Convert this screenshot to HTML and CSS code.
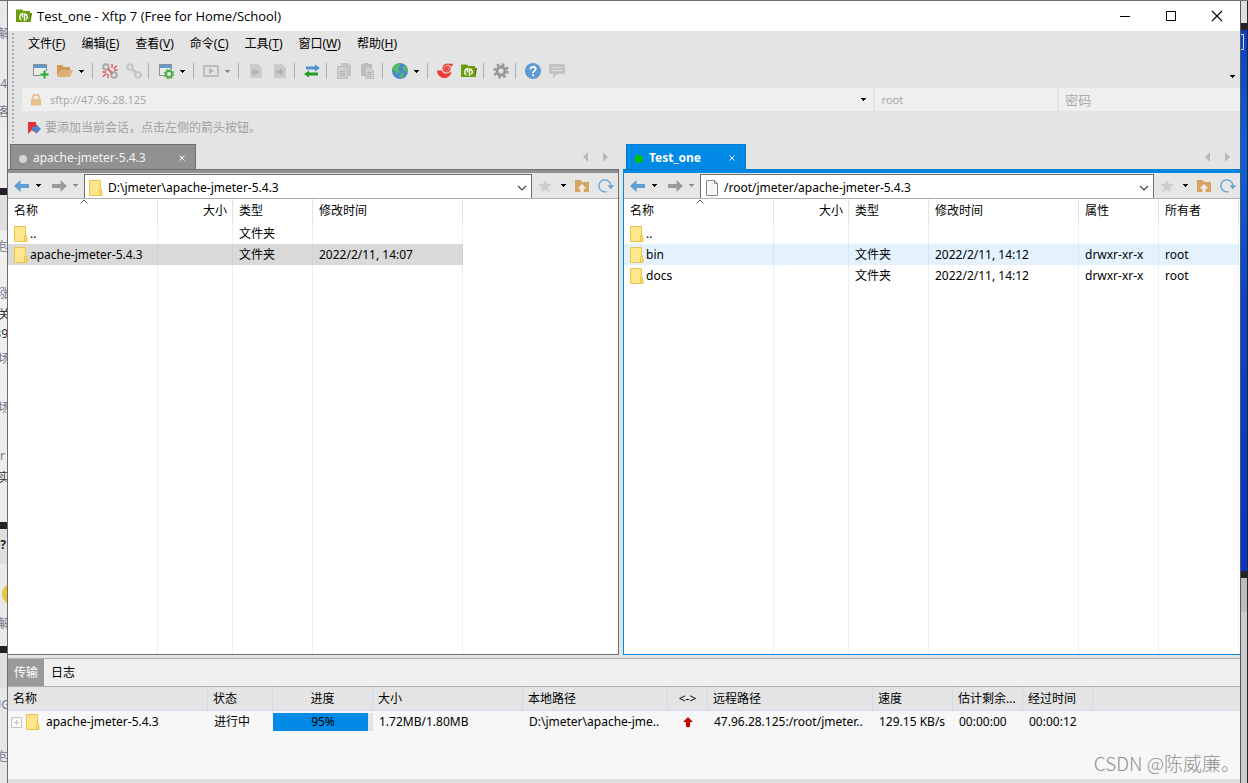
FILE: index.html
```html
<!DOCTYPE html>
<html lang="zh-CN">
<head>
<meta charset="utf-8">
<title>Test_one - Xftp 7</title>
<link rel="stylesheet" href="styles.css">
</head>
<body>
<svg class="defs" aria-hidden="true">
  <symbol id="xftp" viewBox="0 0 16 16"><path d="M0 1.500h6l1.500 1.500H14v11H0z" fill="#6c9c0c"/><path d="M14 5h2l-1.500 9H14z" fill="#557d05"/><path d="M5.300 12A3.600 3.600 0 0 1 6.500 5.500V9.500M8.500 13V6a3 3 0 0 1 1.500 5.500" fill="none" stroke="#fff" stroke-width="1.400"/></symbol>
  <symbol id="folder" viewBox="0 0 14 16"><path d="M.5.500h11v10.500l1.500.500v4H.5z" fill="#ffe58c" stroke="#e9c44a"/><path d="M10.500 15.500V10a1 1 0 0 1 2 0v5.500z" fill="#ffe07a" stroke="#e9c44a"/></symbol>
  <symbol id="page" viewBox="0 0 14 16"><path d="M1.500.500h8l3 3v12h-11z" fill="#f8f8f8" stroke="#888"/><path d="M9.500.500v3h3" fill="none" stroke="#888"/></symbol>
  <symbol id="caret" viewBox="0 0 5 3"><path d="M0 0h5v1H4v1H3v1H2V2H1V1H0z" fill="currentColor"/></symbol>
  <symbol id="back" viewBox="0 0 16 12"><path d="M0 6l6.500-6v4H15v4H6.500v4z" fill="currentColor"/></symbol>
  <symbol id="fwd" viewBox="0 0 16 12"><path d="M16 6L9.500 0v4H1v4h8.500v4z" fill="currentColor"/></symbol>
  <symbol id="star" viewBox="0 0 14 14"><path d="M7 .5l1.900 4.200 4.600.5-3.400 3.100.9 4.700L7 10.700 3 13l.9-4.700L.5 5.200l4.600-.5z" fill="#cdcdcd"/></symbol>
  <symbol id="up" viewBox="0 0 14 12"><path d="M0 0h5.500l1.500 2h7v10H0z" fill="#d5a464"/><path d="M7 4l4.500 4.500H8.700V12H5.300V8.500H2.500z" fill="#f2ece4"/></symbol>
  <symbol id="refresh" viewBox="0 0 16 14"><path d="M8.500 12.600A6 6 0 1 1 12.800 6" fill="none" stroke="#62a0d8" stroke-width="1.300"/><path d="M9.500 6.200h6.500l-3.200 4z" fill="#62a0d8"/></symbol>
  <symbol id="chev" viewBox="0 0 10 6"><path d="M1 1l4 4 4-4" fill="none" stroke="#444" stroke-width="1.200"/></symbol>
  <symbol id="cross" viewBox="0 0 8 8"><path d="M1.500 1.500l5 5M6.500 1.500l-5 5" fill="none" stroke="#fff"/></symbol>
  <symbol id="left" viewBox="0 0 5 10"><path d="M5 0v10L0 5z" fill="#b9b9b9"/></symbol>
  <symbol id="right" viewBox="0 0 5 10"><path d="M0 0v10l5-5z" fill="#b9b9b9"/></symbol>
  <symbol id="sort" viewBox="0 0 8 5"><path d="M.5 4.500L4 1l3.500 3.500" fill="none" stroke="#555"/></symbol>
</svg>

<div class="desk">
  <div class="behind behind-left" aria-hidden="true">
    <i class="bar b1"></i><i class="bar b2"></i><i class="bar b3"></i><i class="ball"></i>
    <span class="t1">解</span><span class="t2">24</span><span class="t3">客</span><span class="t4">包</span><span class="t5">涨</span><span class="t6">关</span><span class="t7">39</span><span class="t8">场</span><span class="t9">场</span><span class="t10">r</span><span class="t11">实</span><span class="t12">?</span><span class="t13">解</span><span class="t14">UG</span><span class="t15">包</span>
  </div>

  <main class="window">
    <header class="titlebar">
      <svg width="16" height="16"><use href="#xftp"/></svg>
      <h1>Test_one - Xftp 7 (Free for Home/School)</h1>
      <button aria-label="最小化"><svg width="12" height="12"><path d="M1 6.500h10" stroke="#000"/></svg></button>
      <button aria-label="最大化"><svg width="12" height="12"><path d="M1.500 1.500h9v9h-9z" stroke="#000" fill="none"/></svg></button>
      <button aria-label="关闭"><svg width="12" height="12"><path d="M1 1l10 10M11 1L1 11" stroke="#000" stroke-width="1.100"/></svg></button>
    </header>

    <section class="chrome">
      <i class="grip"></i>
      <div class="bars">
        <nav class="menu">
          <button>文件(<u>F</u>)</button><button>编辑(<u>E</u>)</button><button>查看(<u>V</u>)</button><button>命令(<u>C</u>)</button><button>工具(<u>T</u>)</button><button>窗口(<u>W</u>)</button><button>帮助(<u>H</u>)</button>
        </nav>
        <div class="toolbar">
          <button class="tool" aria-label="新建"><svg width="16" height="16"><path d="M8 12.500H.5v-11h13V8" fill="#ebebeb" stroke="#8c8c8c"/><path d="M1 2h12v3H1z" fill="#5f9bd3"/><path d="M11.500 7.500v8M7.500 11.500h8" stroke="#1fae24" stroke-width="2"/></svg></button>
          <button class="tool" aria-label="打开"><svg width="16" height="16"><path d="M0 2h5l1.500 2H13v3H4.500L0 13z" fill="#cf9a55"/><path d="M4 7h12l-3 7H0z" fill="#dcb077"/></svg></button>
          <button class="drop" aria-label="打开菜单"><svg width="5" height="3"><use href="#caret"/></svg></button>
          <i class="sep"></i>
          <button class="tool" aria-label="断开"><svg width="16" height="16" fill="none"><g stroke="#a9a9a9" stroke-width="2"><circle cx="4" cy="4" r="2.800"/><circle cx="12" cy="12" r="2.800"/></g><path d="M5.500 5.500L10.500 10.500" stroke="#cf6a6a" stroke-width="2"/><path d="M10 5V1M11.500 5.500l3.500-3M12 7h3.500M6 11v4M4.500 10.500L1 13.500M4 9H.5" stroke="#ea4a50" stroke-width="1.300"/></svg></button>
          <button class="tool" aria-label="重新连接"><svg width="16" height="16" fill="none" stroke="#c5c5c5" stroke-width="2"><circle cx="4" cy="4" r="2.800"/><circle cx="12" cy="12" r="2.800"/><path d="M5.500 5.500l5 5" stroke-width="3"/></svg></button>
          <i class="sep"></i>
          <button class="tool" aria-label="属性"><svg width="16" height="16"><path d="M7 12.500H1.500v-11h12V6" fill="#ebebeb" stroke="#8c8c8c"/><path d="M2 2h11v3H2z" fill="#5f9bd3"/><circle cx="11" cy="11" r="3" fill="#eee" stroke="#4caf45" stroke-width="2"/><circle cx="11" cy="11" r="4.500" fill="none" stroke="#4caf45" stroke-width="1.500" stroke-dasharray="1.770 1.770"/></svg></button>
          <button class="drop" aria-label="属性菜单"><svg width="5" height="3"><use href="#caret"/></svg></button>
          <i class="sep"></i>
          <button class="tool" aria-label="运行"><svg width="16" height="16"><rect x="1" y="3" width="14" height="10" rx="1" fill="none" stroke="#bdbdbd" stroke-width="2"/><path d="M6 5l5 3-5 3z" fill="#b5b5b5"/></svg></button>
          <button class="drop dim" aria-label="运行菜单"><svg width="5" height="3"><use href="#caret"/></svg></button>
          <i class="sep"></i>
          <button class="tool" aria-label="向左传输"><svg width="16" height="16"><path d="M2 1h8l4 4v10H2z" fill="#cbcbcb"/><path d="M3 9l4-4v2.500h4v3H7V13z" fill="#b3b3b3"/></svg></button>
          <button class="tool" aria-label="向右传输"><svg width="16" height="16"><path d="M2 1h8l4 4v10H2z" fill="#cbcbcb"/><path d="M12 9L8 5v2.500H4v3h4V13z" fill="#b3b3b3"/></svg></button>
          <i class="sep"></i>
          <button class="tool" aria-label="同步"><svg width="16" height="16"><path d="M2 3.500h9V1.500L16 5l-5 3.500v-2H2z" fill="#4f90cf"/><path d="M14 9.500H5v-2L0 11l5 3.500v-2h9z" fill="#1f9f24"/></svg></button>
          <i class="sep"></i>
          <button class="tool" aria-label="复制"><svg width="16" height="16"><path d="M5 0h7l3 3v10H5z" fill="#c4c4c4"/><path d="M1.500 3.500h7l3 3v9h-10z" fill="#cfcfcf" stroke="#bdbdbd"/><path d="M4 8.500h5M4 10.500h5M4 12.500h5" stroke="#b2b2b2"/></svg></button>
          <button class="tool" aria-label="粘贴"><svg width="16" height="16"><path d="M1 1h3V0h4v1h4v12H1z" fill="#bcbcbc"/><path d="M5.500 4.500h5l3 3v8h-8z" fill="#d0d0d0" stroke="#bdbdbd"/><path d="M7 9.500h5M7 11.500h5M7 13.500h4" stroke="#b2b2b2"/></svg></button>
          <i class="sep"></i>
          <button class="tool" aria-label="浏览器"><svg width="16" height="16"><circle cx="8" cy="8" r="8" fill="#4a8acb"/><path d="M4 1.500L8.500 0 8 3 5.500 5l2 2.500L6 11l-2.500-2L0 6.500C.5 4 2 2.500 4 1.500zM10.500 4L13 2.500 15.500 6 15.700 9 12 8zM9 9.500l3 1L11 14l-2 1.500-1-3z" fill="#52bd62"/></svg></button>
          <button class="drop" aria-label="浏览器菜单"><svg width="5" height="3"><use href="#caret"/></svg></button>
          <i class="sep"></i>
          <button class="tool" aria-label="Xshell"><svg width="16" height="16" fill="none"><path d="M0 7.500h5C5.500 10.500 9 12 14.500 8.500 14 12.500 11 15 7.500 15 3.500 15 0 12 0 7.500z" fill="#ef3a34"/><path d="M10.200 6.600a.9.900 0 1 1 .9-1.100c.4 1.700-2.600 2.500-3.200.5-.4-2.200 2.600-3.500 4.300-1.900 2 2-.3 5.400-3.400 4.600C5 7.500 5.500 2 9.500 1.300c2.300-.4 4.300.7 5 2.500M12.500 1.500H16" stroke="#ef3a34" stroke-width="1.300"/></svg></button>
          <button class="tool" aria-label="Xftp"><svg width="16" height="16"><use href="#xftp"/></svg></button>
          <i class="sep"></i>
          <button class="tool" aria-label="选项"><svg width="16" height="16" fill="none" stroke="#989898"><circle cx="8" cy="8" r="4" stroke-width="3"/><circle cx="8" cy="8" r="6.500" stroke-width="2.500" stroke-dasharray="2.550 2.550"/></svg></button>
          <i class="sep"></i>
          <button class="tool" aria-label="帮助"><svg width="16" height="16"><circle cx="8" cy="8" r="8" fill="#5f9bd3"/><path d="M5.500 6.200C5.500 3 10.700 3 10.700 6 10.700 7.800 8 8 8 10M8 11.300v1.900" fill="none" stroke="#fff" stroke-width="1.800"/></svg></button>
          <button class="tool" aria-label="反馈"><svg width="16" height="16"><path d="M1.500 1h13A1.500 1.500 0 0 1 16 2.500v7a1.500 1.500 0 0 1-1.500 1.500H8l-4 4.500V11H1.500A1.500 1.500 0 0 1 0 9.500v-7A1.500 1.500 0 0 1 1.500 1z" fill="#c3c3c3"/><path d="M3 4.500h10M3 7.500h10" stroke="#ddd" stroke-width="1"/></svg></button>
          <button class="more" aria-label="更多"><svg width="5" height="3"><use href="#caret"/></svg></button>
        </div>
        <form class="connect">
          <label class="host"><svg width="12" height="12"><path d="M1 5h10v6.500H1z" fill="#e8bf8a"/><path d="M3 5V3.500a3 3 0 0 1 6 0V5" fill="none" stroke="#e8bf8a" stroke-width="1.800"/></svg><input aria-label="主机" value="sftp://47.96.28.125"><svg width="5" height="3"><use href="#caret"/></svg></label>
          <input class="user" aria-label="用户名" value="root">
          <input class="pass" type="password" aria-label="密码" placeholder="密码">
        </form>
        <p class="hint"><svg width="14" height="14"><path d="M1 1h8v11l-4-3-4 4z" fill="#e23238"/><path d="M5 6h4V3l5 5-5 5v-3H5z" fill="#4c86cb"/></svg>要添加当前会话，点击左侧的箭头按钮。</p>
      </div>
    </section>

    <div class="panes">
      <section class="pane local">
        <div class="tabs">
          <button class="tab"><i class="dot"></i><span>apache-jmeter-5.4.3</span><svg width="8" height="8"><use href="#cross"/></svg></button>
          <span class="scroll"><svg width="5" height="10"><use href="#left"/></svg><svg width="5" height="10"><use href="#right"/></svg></span>
        </div>
        <div class="body">
          <div class="navbar">
            <button class="arrow" aria-label="后退"><svg width="16" height="12"><use href="#back"/></svg></button>
            <button class="drop" aria-label="后退历史"><svg width="5" height="3"><use href="#caret"/></svg></button>
            <button class="arrow off" aria-label="前进"><svg width="16" height="12"><use href="#fwd"/></svg></button>
            <button class="drop dim" aria-label="前进历史"><svg width="5" height="3"><use href="#caret"/></svg></button>
            <div class="combo"><svg width="14" height="16"><use href="#folder"/></svg><input aria-label="本地路径" value="D:\jmeter\apache-jmeter-5.4.3"><button aria-label="展开"><svg width="10" height="6"><use href="#chev"/></svg></button></div>
            <div class="side"><svg width="14" height="14"><use href="#star"/></svg><svg width="5" height="3"><use href="#caret"/></svg><svg width="14" height="12"><use href="#up"/></svg><svg width="16" height="14"><use href="#refresh"/></svg></div>
          </div>
          <div class="list">
            <table class="files local-files">
              <colgroup><col class="c150"><col class="c75"><col class="c80"><col class="c150"></colgroup>
              <thead><tr><th class="sorted">名称<svg width="8" height="5"><use href="#sort"/></svg></th><th class="num">大小</th><th>类型</th><th>修改时间</th></tr></thead>
              <tbody>
                <tr><td class="name"><svg width="14" height="16"><use href="#folder"/></svg>..</td><td></td><td>文件夹</td><td></td></tr>
                <tr class="picked"><td class="name"><svg width="14" height="16"><use href="#folder"/></svg>apache-jmeter-5.4.3</td><td></td><td>文件夹</td><td>2022/2/11, 14:07</td></tr>
                <tr class="rest"><td></td><td></td><td></td><td></td></tr>
              </tbody>
            </table>
          </div>
        </div>
      </section>

      <section class="pane remote">
        <div class="tabs">
          <button class="tab"><i class="dot"></i><span>Test_one</span><svg width="8" height="8"><use href="#cross"/></svg></button>
          <span class="scroll"><svg width="5" height="10"><use href="#left"/></svg><svg width="5" height="10"><use href="#right"/></svg></span>
        </div>
        <div class="body">
          <div class="navbar">
            <button class="arrow" aria-label="后退"><svg width="16" height="12"><use href="#back"/></svg></button>
            <button class="drop" aria-label="后退历史"><svg width="5" height="3"><use href="#caret"/></svg></button>
            <button class="arrow off" aria-label="前进"><svg width="16" height="12"><use href="#fwd"/></svg></button>
            <button class="drop dim" aria-label="前进历史"><svg width="5" height="3"><use href="#caret"/></svg></button>
            <div class="combo"><svg width="14" height="16"><use href="#page"/></svg><input aria-label="远程路径" value="/root/jmeter/apache-jmeter-5.4.3"><button aria-label="展开"><svg width="10" height="6"><use href="#chev"/></svg></button></div>
            <div class="side"><svg width="14" height="14"><use href="#star"/></svg><svg width="5" height="3"><use href="#caret"/></svg><svg width="14" height="12"><use href="#up"/></svg><svg width="16" height="14"><use href="#refresh"/></svg></div>
          </div>
          <div class="list">
            <table class="files remote-files">
              <colgroup><col class="c150"><col class="c75"><col class="c80"><col class="c150"><col class="c80"><col class="c80"></colgroup>
              <thead><tr><th class="sorted">名称<svg width="8" height="5"><use href="#sort"/></svg></th><th class="num">大小</th><th>类型</th><th>修改时间</th><th>属性</th><th>所有者</th></tr></thead>
              <tbody>
                <tr><td class="name"><svg width="14" height="16"><use href="#folder"/></svg>..</td><td></td><td></td><td></td><td></td><td></td></tr>
                <tr class="hover"><td class="name"><svg width="14" height="16"><use href="#folder"/></svg>bin</td><td></td><td>文件夹</td><td>2022/2/11, 14:12</td><td>drwxr-xr-x</td><td>root</td></tr>
                <tr><td class="name"><svg width="14" height="16"><use href="#folder"/></svg>docs</td><td></td><td>文件夹</td><td>2022/2/11, 14:12</td><td>drwxr-xr-x</td><td>root</td></tr>
                <tr class="rest"><td></td><td></td><td></td><td></td><td></td><td></td></tr>
              </tbody>
            </table>
          </div>
        </div>
      </section>
    </div>

    <section class="transfer">
      <div class="ttabs"><button class="on">传输</button><button>日志</button></div>
      <table class="jobs">
        <colgroup><col class="c200"><col class="c65"><col class="c100"><col class="c150"><col class="c145"><col class="c40"><col class="c165"><col class="c80"><col class="c70"><col class="c70"><col></colgroup>
        <thead><tr><th>名称</th><th>状态</th><th class="mid">进度</th><th>大小</th><th>本地路径</th><th class="mid">&lt;-&gt;</th><th>远程路径</th><th>速度</th><th>估计剩余...</th><th>经过时间</th><th class="last"></th></tr></thead>
        <tbody><tr>
          <td class="job"><div><svg width="11" height="11"><path d="M.5.500h10v10H.5zM3 5.500h5M5.500 3v5" fill="none" stroke="#c4c4c4"/></svg><svg width="14" height="16"><use href="#folder"/></svg>apache-jmeter-5.4.3</div></td>
          <td>进行中</td>
          <td class="meter"><div class="track"><div class="fill" style="width:95%"></div><span>95%</span></div></td>
          <td>1.72MB/1.80MB</td><td>D:\jmeter\apache-jme..</td>
          <td class="mid"><svg width="10" height="10"><path d="M5 0l5 5H7v5H3V5H0z" fill="#c80000"/></svg></td>
          <td>47.96.28.125:/root/jmeter..</td><td>129.15 KB/s</td><td>00:00:00</td><td>00:00:12</td><td></td>
        </tr></tbody>
      </table>
    </section>
    <footer class="status"></footer>
    <div class="watermark">CSDN @陈威廉。</div>
  </main>

  <div class="behind behind-right" aria-hidden="true"><i class="bracket"></i></div>
</div>
</body>
</html>
```
FILE: styles.css
```css
* { box-sizing: border-box; }
body { margin: 0; color: #000; font: 12px/16px "Noto Sans", "Noto Sans CJK SC", sans-serif; }
button, input { margin: 0; padding: 0; border: 0; background: none; color: inherit; font: inherit; }
svg { display: block; flex: none; }
i { font-style: normal; }
.defs { position: absolute; width: 0; height: 0; }

.desk { display: grid; grid-template-columns: 8px minmax(0, 1fr) 8px; min-height: 100vh; border-top: 1px solid #706c70; }

/* neighbouring windows showing past the edges */
.behind { position: relative; overflow: hidden; }
.behind-left { background: linear-gradient(#e8e8e8, #f0f0f0 40%, #e6e6e6); border-right: 1px solid #6b6b70; color: #77778a; font-size: 12px; }
.behind-left span { position: absolute; right: -3px; white-space: nowrap; }
.t1 { top: 25px; } .behind-left .t2 { top: 75px; right: 0; } .t3 { top: 103px; } .t4 { top: 238px; }
.t5 { top: 285px; } .t6 { top: 306px; color: #333; } .behind-left .t7 { top: 325px; right: -1px; color: #333; }
.t8 { top: 350px; } .t9 { top: 399px; } .behind-left .t10 { top: 447px; right: 2px; } .t11 { top: 469px; color: #333; }
.behind-left .t12 { top: 536px; right: 1px; color: #222; font-weight: 700; } .t13 { top: 615px; } .t14 { top: 696px; } .t15 { top: 748px; }
.bar { position: absolute; left: 0; width: 100%; height: 42px; border-top: 7px solid #222226; background: #dfdfdf; }
.b1 { top: 187px; } .b2 { top: 521px; } .b3 { top: 645px; }
.ball { position: absolute; top: 582px; left: 2px; width: 22px; height: 22px; border-radius: 50%; background: #e8c63c; }
.behind-right { border-left: 1px solid #55555a; background: linear-gradient(#e0e0e0 22px, #222 22px 29px, #0a3fc4 29px, #0b62dc 150px, #0a45c8 300px, #0833c4 570px, #222 570px 577px, #bcbcbc 577px 611px, #cdcdcd 611px); border-right: 1px solid #22242c; }
.bracket { position: absolute; top: 33px; left: 0; width: 3px; height: 16px; border: 1px solid #d8d8d8; border-left: 0; }

.window { position: relative; display: flex; flex-direction: column; min-width: 0; background: #e4e4e4; }
.titlebar { display: flex; align-items: center; height: 30px; padding-left: 8px; background: #fff; }
.titlebar h1 { flex: 1; margin: 0 0 0 5px; font: 13px/16px "Open Sans", sans-serif; }
.titlebar button { display: grid; place-items: center; width: 46px; height: 30px; }

.chrome { display: flex; padding-left: 4px; }
.grip { width: 2px; margin: 2px 8px 2px 0; background: repeating-linear-gradient(#a8a8a8 0 2px, #f0f0f0 2px 3px, #e4e4e4 3px 4px); }
.bars { flex: 1; min-width: 0; }
.menu { display: flex; gap: 16px; height: 25px; padding: 1px 0 0 6px; }
.menu u { text-underline-offset: 2px; }
.toolbar { display: flex; align-items: center; height: 31px; padding: 0 0 1px 6px; }
.tool { display: grid; place-items: center; width: 24px; height: 24px; padding-left: 2px; }
.drop { display: grid; align-items: center; width: 13px; height: 24px; padding-left: 3px; }
.dim { color: #8a8a8a; }
.sep { width: 8px; height: 16px; background: linear-gradient(#b0b0b0, #b0b0b0) 3px 0 / 1px 100% no-repeat; }
.more { align-self: end; margin-left: auto; padding: 8px 5px; }
.connect { display: grid; grid-template-columns: minmax(0, 852fr) minmax(0, 183fr) minmax(0, 181fr); gap: 2px; height: 24px; padding-top: 1px; color: #a8a8a8; }
.connect input { min-width: 0; }
.host { display: flex; align-items: center; padding: 0 7px 0 8px; background: #efefef; }
.host input { flex: 1; padding-left: 8px; font-size: 11px; }
.host svg:last-child { color: #000; }
.connect .user, .connect .pass { padding-left: 7px; background: #efefef; font-size: 11px; }
.connect .pass { padding-left: 6px; font-size: 13px; }
.connect .pass::placeholder { color: #a8a8a8; }
.hint { display: flex; align-items: center; gap: 4px; height: 33px; margin: 0; padding-left: 5px; color: #a2a2a2; }

.panes { flex: 1; display: grid; grid-template-columns: minmax(0, 611fr) minmax(0, 617fr); gap: 4px; margin-bottom: 3px; }
.pane { display: flex; flex-direction: column; --edge: #6f6f6f; --fill: #919191; }
.remote { --edge: #007acc; --fill: #008ae6; }
.tabs { display: flex; justify-content: space-between; height: 25px; padding: 0 11px 0 2px; }
.remote .tabs { padding: 0 10px 0 3px; }
.tab { display: flex; align-items: center; width: 186px; padding: 1px 9px 0 8px; border: 1px solid var(--edge); border-bottom: 0; background: var(--fill); color: #f2f2f2; text-align: left; }
.tab span { flex: 1; padding-left: 6px; }
.remote .tab { width: 120px; color: #fff; font-weight: 700; }
.dot { width: 8px; height: 8px; margin-top: 3px; border-radius: 50%; background: #d4d4d4; }
.remote .dot { background: #00c000; }
.scroll { display: flex; align-items: center; gap: 15px; }
.body { flex: 1; display: flex; flex-direction: column; border: 1px solid var(--edge); border-left: 0; background: #fff; }
.remote .body { border-left: 1px solid var(--fill); border-right: 0; border-bottom-color: var(--fill); }
.navbar { display: flex; height: 29px; padding-left: 5px; border-top: 3px solid var(--fill); border-bottom: 1px solid #b0b0b0; background: #e6e6e6; }
.arrow { display: grid; align-items: center; width: 20px; padding-left: 1px; color: #5f9fd6; }
.off { color: #9b9b9b; }
.navbar .drop { width: 17px; }
.navbar .dim { width: 14px; }
.combo { flex: 1; display: flex; align-items: center; min-width: 0; margin: 1px 0 0; padding: 2px 0 0 4px; border: 1px solid #6f6f6f; border-bottom: 0; background: #fff; }
.combo input { flex: 1; min-width: 0; padding-left: 5px; }
.combo button { display: grid; place-items: center; width: 18px; }
.side { display: flex; align-items: center; gap: 9px; padding: 0 4px 0 6px; }

.list { flex: 1; display: grid; }
table { border-collapse: separate; border-spacing: 0; table-layout: fixed; text-align: left; }
th { font-weight: 400; }
th, td { padding: 0 5px; overflow: hidden; white-space: nowrap; }
.files { height: 100%; }
.local-files { width: 455px; }
.remote-files { width: 615px; }
.files th { height: 24px; padding-left: 6px; border-right: 1px solid #e2e2e2; }
.files td { height: 21px; padding-left: 6px; border-right: 1px solid #e9f1fc; }
.name svg { display: inline-block; margin-right: 2px; vertical-align: -4px; }
.files .num { text-align: right; }
.files .rest td { height: auto; }
.sorted { position: relative; }
.sorted svg { position: absolute; top: 0; left: 48%; }
.picked td { background: #d9d9d9; border-color: #ccd3dc; }
.hover td { background: #e4f2fe; border-color: #cfe7fb; }
.c40 { width: 40px; } .c65 { width: 65px; } .c70 { width: 70px; } .c75 { width: 75px; } .c80 { width: 80px; }
.c100 { width: 100px; } .c145 { width: 145px; } .c150 { width: 150px; } .c165 { width: 165px; } .c200 { width: 200px; }

.transfer { min-height: 121px; border-top: 1px solid #b0b0b0; background: #f7f7f7; }
.ttabs { display: flex; height: 28px; border-bottom: 1px solid #b0b0b0; background: #efefef; }
.ttabs button { padding: 0 6px; }
.ttabs .on { background: #999; color: #fff; }
.ttabs button + button { padding-left: 7px; }
.jobs { width: 100%; }
.jobs th { height: 24px; border-right: 1px solid #d0d9ea; border-bottom: 1px solid #d0d9ea; background: #e4e4e4; }
.jobs th.last { border-right: 0; }
.jobs td { height: 22px; padding-right: 0; padding-left: 6px; }
.jobs .mid { padding: 0; text-align: center; }
.mid svg { margin: 0 auto; }
.jobs .job { padding-left: 3px; }
.job div { display: flex; align-items: center; gap: 4px; }
.job svg + svg { margin-right: 2px; }
.jobs .meter { padding: 0; }
.track { position: relative; height: 18px; background: #e4e4e4; text-align: center; line-height: 18px; }
.fill { position: absolute; inset: 0 auto 0 0; background: #008ae6; }
.track span { position: relative; }
.status { height: 4px; background: #dedede; }
.watermark { position: absolute; right: 0; bottom: 6px; color: #8f8f8f; font: 300 19px/28px "Noto Sans CJK SC", sans-serif; }
```
